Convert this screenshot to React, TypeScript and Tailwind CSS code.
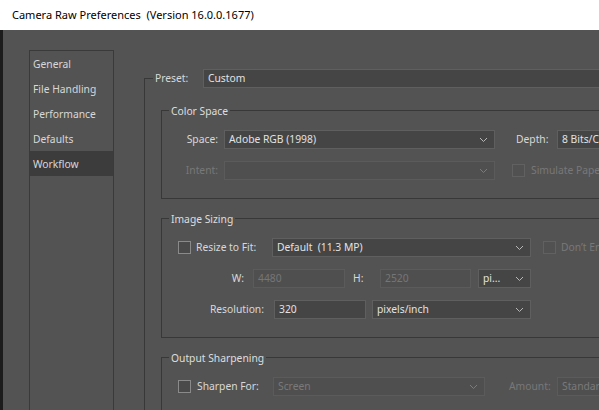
import React from "react";

const FONT = { fontFamily: '"Noto Sans", "Open Sans", sans-serif' };

const Chevron: React.FC<{ dim?: boolean }> = ({ dim }) => (
  <svg width="9" height="6" viewBox="0 0 9 6" className="shrink-0">
    <polyline
      points="1,1 4.5,4.5 8,1"
      fill="none"
      stroke={dim ? "#7c7c7c" : "#b8b8b8"}
      strokeWidth="1"
    />
  </svg>
);

type DropProps = { value: string; width: string; disabled?: boolean; arrow?: boolean };

const Dropdown: React.FC<DropProps> = ({ value, width, disabled, arrow = true }) => (
  <div
    className={`${width} h-[19px] shrink-0 flex items-center justify-between pl-[4px] pr-[6px] border ${
      disabled ? "bg-[#4f4f4f] border-[#5b5b5b] text-[#7a7a7a]" : "bg-[#454545] border-[#5f5f5f] text-[#e2e2e2]"
    }`}
  >
    <span className="whitespace-pre pt-[1px]">{value}</span>
    {arrow && <Chevron dim={disabled} />}
  </div>
);

const Input: React.FC<DropProps> = ({ value, width, disabled }) => (
  <div
    className={`${width} h-[19px] shrink-0 flex items-center pl-[4px] pt-[1px] border ${
      disabled ? "bg-[#4f4f4f] border-[#5b5b5b] text-[#767676]" : "bg-[#454545] border-[#5f5f5f] text-[#e2e2e2]"
    }`}
  >
    {value}
  </div>
);

const Checkbox: React.FC<{ disabled?: boolean }> = ({ disabled }) => (
  <div
    className={`w-[13px] h-[13px] shrink-0 border ${
      disabled ? "border-[#616161] bg-[#515151]" : "border-[#8a8a8a] bg-[#4a4a4a]"
    }`}
  />
);

const Group: React.FC<{ title: string; children: React.ReactNode }> = ({ title, children }) => (
  <div className="relative ml-[16px] w-[560px] border border-[#383838] pt-[19px] pb-[18px]">
    <div className="absolute -top-[8px] left-[7px] px-[2px] bg-[#535353] text-[#dedede] leading-[16px]">
      {title}
    </div>
    {children}
  </div>
);

const navItems = ["General", "File Handling", "Performance", "Defaults", "Workflow"];

export default function App() {
  return (
    <div style={FONT} className="w-[599px] h-[410px] overflow-hidden flex flex-col text-[10.3px]">
      <div className="h-[30px] shrink-0 bg-white flex items-center pl-[12px] text-[11px] text-black">
        Camera Raw Preferences&nbsp;&nbsp;(Version 16.0.0.1677)
      </div>
      <div className="flex-1 flex bg-[#535353] text-[#d8d8d8] overflow-hidden">
        <div className="w-[3px] shrink-0 bg-[#1c1c1c]" />
        <div className="flex pl-[26px] pt-[20px]">
          {/* sidebar */}
          <div className="w-[85px] h-[380px] shrink-0 border border-[#3a3a3a]">
            {navItems.map((item) => (
              <div
                key={item}
                className={`h-[25px] flex items-center pl-[3px] pt-[2px] ${
                  item === "Workflow" ? "bg-[#3c3c3c]" : ""
                }`}
              >
                {item}
              </div>
            ))}
          </div>

          {/* main panel */}
          <div className="ml-[30px] mt-[28px] w-[620px] shrink-0 border-l border-t border-[#383838]">
            <div className="-mt-[10px] h-[19px] flex items-center">
              <span className="ml-[8px] w-[50px] pl-[2px] pt-[1px] bg-[#535353]">Preset:</span>
              <Dropdown value="Custom" width="w-[500px]" />
            </div>

            <div className="mt-[22px]">
              <Group title="Color Space">
                <div className="h-[19px] flex items-center">
                  <span className="w-[56px] mr-[6px] pt-[1px] text-right">Space:</span>
                  <Dropdown value="Adobe RGB (1998)" width="w-[271px]" />
                  <span className="ml-[21px] w-[41px] pt-[1px]">Depth:</span>
                  <Dropdown value="8 Bits/Channel" width="w-[110px]" />
                </div>
                <div className="mt-[12px] h-[19px] flex items-center">
                  <span className="w-[56px] mr-[6px] pt-[1px] text-right text-[#787878]">Intent:</span>
                  <Dropdown value="" width="w-[271px]" disabled />
                  <div className="ml-[17px]">
                    <Checkbox disabled />
                  </div>
                  <span className="ml-[6px] pt-[1px] text-[#787878] whitespace-nowrap">Simulate Paper &amp; Ink</span>
                </div>
              </Group>
            </div>

            <div className="mt-[19px]">
              <Group title="Image Sizing">
                <div className="h-[19px] flex items-center">
                  <div className="ml-[16px]">
                    <Checkbox />
                  </div>
                  <span className="ml-[5px] w-[76px] pt-[1px]">Resize to Fit:</span>
                  <Dropdown value="Default  (11.3 MP)" width="w-[259px]" />
                  <div className="ml-[12px]">
                    <Checkbox disabled />
                  </div>
                  <span className="ml-[5px] pt-[1px] text-[#787878] whitespace-nowrap">Don’t Enlarge</span>
                </div>
                <div className="mt-[12px] h-[19px] flex items-center">
                  <span className="w-[82px] mr-[9px] pt-[1px] text-right">W:</span>
                  <Input value="4480" width="w-[92px]" disabled />
                  <span className="ml-[8px] w-[27px] pt-[1px]">H:</span>
                  <Input value="2520" width="w-[91px]" disabled />
                  <div className="ml-[7px]">
                    <Dropdown value="pi..." width="w-[53px]" />
                  </div>
                </div>
                <div className="mt-[12px] h-[19px] flex items-center">
                  <span className="w-[102px] mr-[10px] pt-[1px] text-right">Resolution:</span>
                  <Input value="320" width="w-[92px]" />
                  <div className="ml-[6px]">
                    <Dropdown value="pixels/inch" width="w-[159px]" />
                  </div>
                </div>
              </Group>
            </div>

            <div className="mt-[19px]">
              <Group title="Output Sharpening">
                <div className="h-[19px] flex items-center">
                  <div className="ml-[16px]">
                    <Checkbox />
                  </div>
                  <span className="ml-[6px] w-[76px] pt-[1px]">Sharpen For:</span>
                  <Dropdown value="Screen" width="w-[212px]" disabled />
                  <span className="ml-[24px] w-[48px] pt-[1px] text-[#787878]">Amount:</span>
                  <Dropdown value="Standard" width="w-[100px]" disabled />
                </div>
              </Group>
            </div>
          </div>
        </div>
      </div>
    </div>
  );
}
